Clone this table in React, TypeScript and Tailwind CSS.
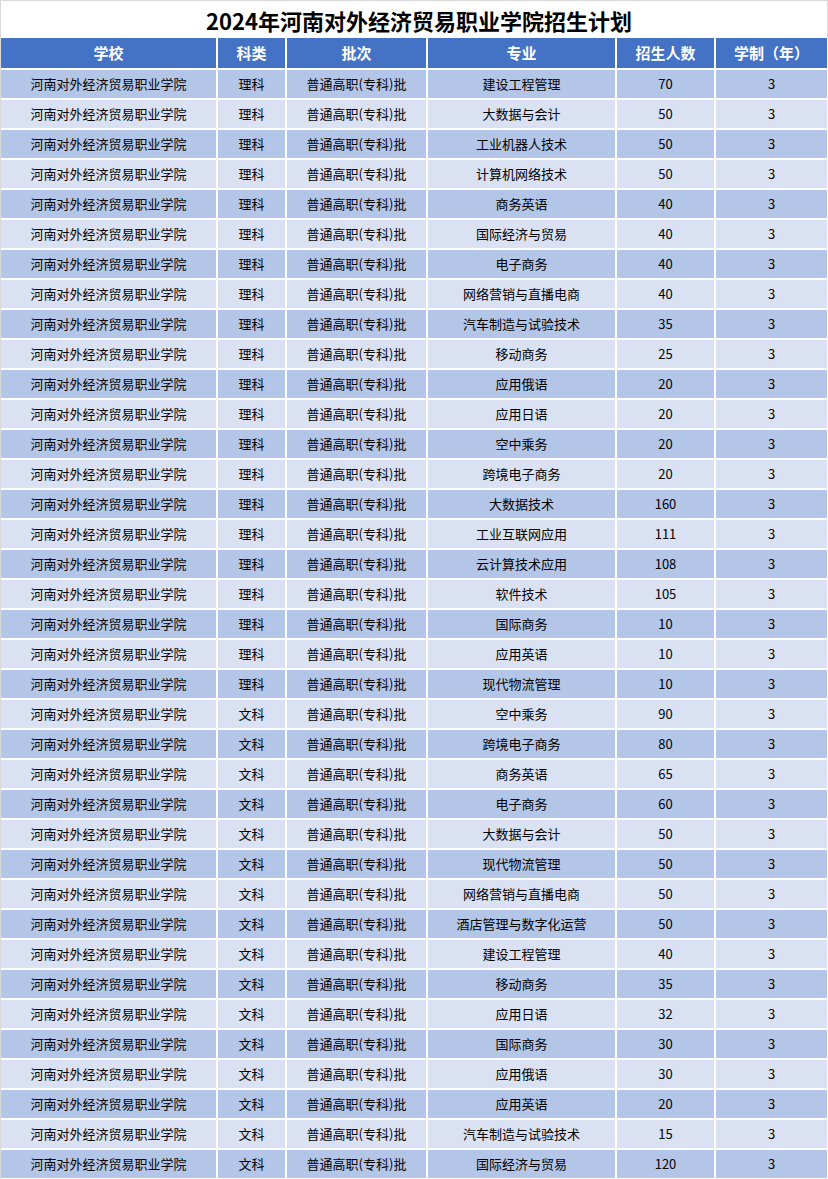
import React from "react";

const li: [string, number][] = [
  ["建设工程管理", 70],
  ["大数据与会计", 50],
  ["工业机器人技术", 50],
  ["计算机网络技术", 50],
  ["商务英语", 40],
  ["国际经济与贸易", 40],
  ["电子商务", 40],
  ["网络营销与直播电商", 40],
  ["汽车制造与试验技术", 35],
  ["移动商务", 25],
  ["应用俄语", 20],
  ["应用日语", 20],
  ["空中乘务", 20],
  ["跨境电子商务", 20],
  ["大数据技术", 160],
  ["工业互联网应用", 111],
  ["云计算技术应用", 108],
  ["软件技术", 105],
  ["国际商务", 10],
  ["应用英语", 10],
  ["现代物流管理", 10],
];

const wen: [string, number][] = [
  ["空中乘务", 90],
  ["跨境电子商务", 80],
  ["商务英语", 65],
  ["电子商务", 60],
  ["大数据与会计", 50],
  ["现代物流管理", 50],
  ["网络营销与直播电商", 50],
  ["酒店管理与数字化运营", 50],
  ["建设工程管理", 40],
  ["移动商务", 35],
  ["应用日语", 32],
  ["国际商务", 30],
  ["应用俄语", 30],
  ["应用英语", 20],
  ["汽车制造与试验技术", 15],
  ["国际经济与贸易", 120],
];

const rows = [
  ...li.map(([m, n]) => ({ kl: "理科", m, n })),
  ...wen.map(([m, n]) => ({ kl: "文科", m, n })),
];

const headers = ["学校", "科类", "批次", "专业", "招生人数", "学制（年）"];

export default function App() {
  return (
    <div
      className="w-[828px] h-[1179px] bg-white border-l border-[#d9d9d9] overflow-hidden"
      style={{ fontFamily: '"Noto Sans CJK SC", "Noto Sans", sans-serif' }}
    >
      <div className="h-[38px] border-t border-r border-[#d9d9d9] flex items-center justify-center pl-[10px] text-[22px] font-bold text-black leading-none">
        2024年河南对外经济贸易职业学院招生计划
      </div>
      <div className="grid grid-cols-[215px_67px_139px_187px_97px_111px] gap-[2px] bg-white w-[826px]">
        {headers.map((h) => (
          <div
            key={h}
            className="h-[30px] bg-[#4472c4] text-white font-bold text-[15px] flex items-center justify-center"
          >
            {h}
          </div>
        ))}
        {rows.map((r, i) => {
          const bg = i % 2 === 0 ? "bg-[#b4c6e7]" : "bg-[#d9e1f2]";
          const cells = ["河南对外经济贸易职业学院", r.kl, "普通高职(专科)批", r.m, String(r.n), "3"];
          return cells.map((c, j) => (
            <div
              key={`${i}-${j}`}
              className={`h-[28px] ${bg} text-[13px] text-black flex items-center justify-center`}
            >
              {c}
            </div>
          ));
        })}
      </div>
    </div>
  );
}
